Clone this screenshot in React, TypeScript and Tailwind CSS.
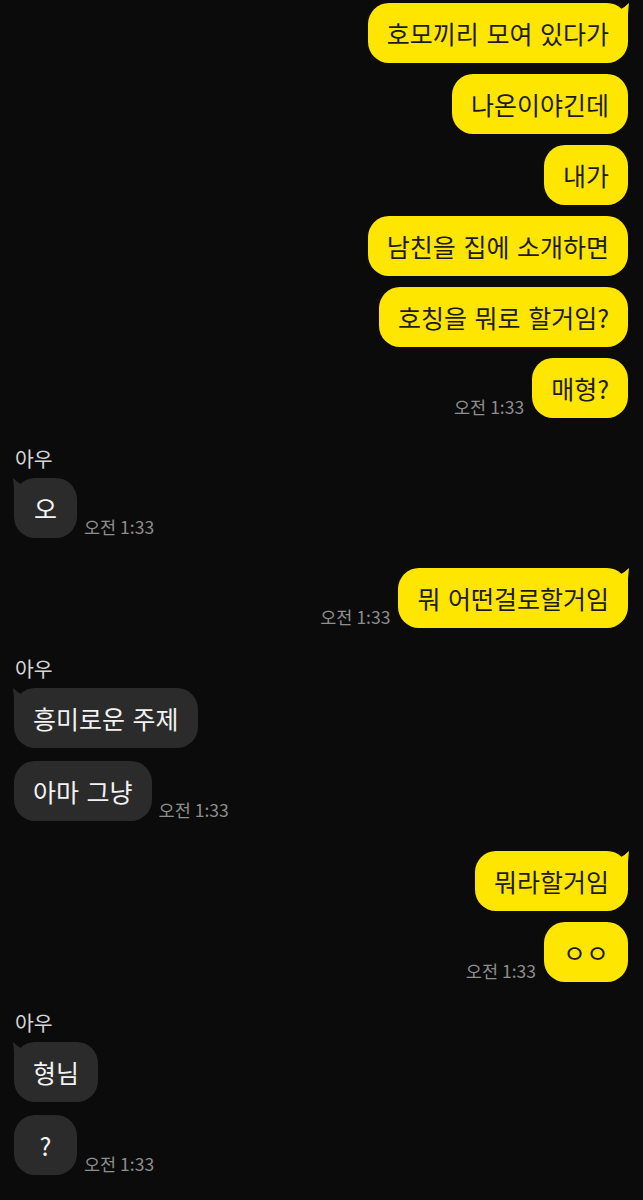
import React from 'react';

type Msg = {
  text: string;
  mine: boolean;
  first?: boolean; // first bubble of a run: gets the tail
  time?: string;
  name?: string;
};

const messages: Msg[] = [
  { text: '호모끼리 모여 있다가', mine: true, first: true },
  { text: '나온이야긴데', mine: true },
  { text: '내가', mine: true },
  { text: '남친을 집에 소개하면', mine: true },
  { text: '호칭을 뭐로 할거임?', mine: true },
  { text: '매형?', mine: true, time: '오전 1:33' },
  { text: '오', mine: false, first: true, name: '아우', time: '오전 1:33' },
  { text: '뭐 어떤걸로할거임', mine: true, first: true, time: '오전 1:33' },
  { text: '흥미로운 주제', mine: false, first: true, name: '아우' },
  { text: '아마 그냥', mine: false, time: '오전 1:33' },
  { text: '뭐라할거임', mine: true, first: true },
  { text: 'ㅇㅇ', mine: true, time: '오전 1:33' },
  { text: '형님', mine: false, first: true, name: '아우' },
  { text: '?', mine: false, time: '오전 1:33' },
];

const font = { fontFamily: '"Noto Sans CJK KR", "Noto Sans", sans-serif' };

// little horn on the top corner of the first bubble
const Tail: React.FC<{ mine: boolean }> = ({ mine }) =>
  mine ? (
    <svg className="absolute -top-[2px] -right-[2px]" width="22" height="24" viewBox="0 0 22 24">
      <path d="M21 2 Q17 6 13 8 L8 24 L20 24 L20 13 Q20.5 6 21 2 Z" fill="#ffe600" />
    </svg>
  ) : (
    <svg className="absolute -top-[2px] -left-[2px]" width="22" height="24" viewBox="0 0 22 24">
      <path d="M1 2 Q5 6 9 8 L14 24 L2 24 L2 13 Q1.5 6 1 2 Z" fill="#2b2b2b" />
    </svg>
  );

const Bubble: React.FC<{ msg: Msg }> = ({ msg }) => (
  <div
    className={`relative min-w-[63px] h-[60px] px-[19px] flex items-center justify-center rounded-[21px] text-[25px] [word-spacing:2px] whitespace-nowrap ${
      msg.mine ? 'bg-[#ffe600] text-[#1c1c1c]' : 'bg-[#2b2b2b] text-[#f2f2f2]'
    }`}
    style={font}
  >
    {msg.first && <Tail mine={msg.mine} />}
    <span className="relative leading-[30px]">{msg.text}</span>
  </div>
);

const Time: React.FC<{ t: string }> = ({ t }) => (
  <span className="text-[17.5px] leading-none text-[#8e8e8e] mb-[3px] whitespace-nowrap" style={font}>
    {t}
  </span>
);

export default function App() {
  return (
    <div className="min-h-[1200px] bg-[#0b0b0b] pt-[3px] pl-[14px] pr-[15px]" style={font}>
      {messages.map((m, i) => {
        const prev = messages[i - 1];
        const newGroup = i > 0 && (m.name || prev.mine !== m.mine);
        const gap = i === 0 ? '' : newGroup ? 'mt-[30px]' : m.mine ? 'mt-[11px]' : 'mt-[13px]';
        return (
          <div key={i} className={gap}>
            {m.name && (
              <div className="text-[20.5px] leading-[20px] text-[#d6d6d6] mb-[10px] pl-[1px]">{m.name}</div>
            )}
            {m.mine ? (
              <div className="flex justify-end items-end gap-[8px]">
                {m.time && <Time t={m.time} />}
                <Bubble msg={m} />
              </div>
            ) : (
              <div className="flex items-end gap-[7px]">
                <Bubble msg={m} />
                {m.time && <Time t={m.time} />}
              </div>
            )}
          </div>
        );
      })}
    </div>
  );
}
